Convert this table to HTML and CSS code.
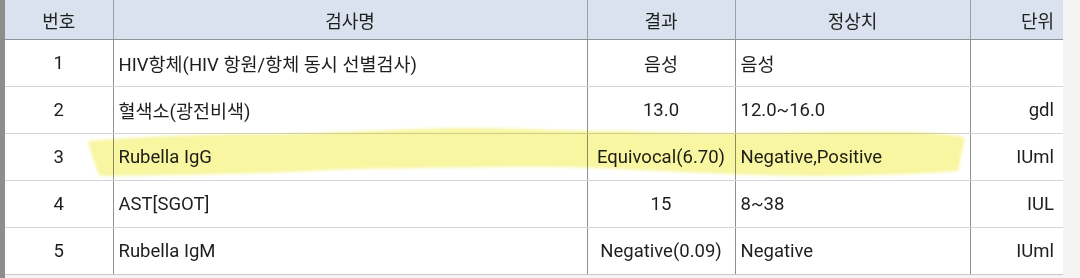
FILE: index.html
```html
<!DOCTYPE html>
<html lang="ko">
<head>
<meta charset="utf-8">
<link rel="stylesheet" href="styles.css">
</head>
<body>
<div class="page">
  <div class="edge"></div>
  <table class="results">
    <colgroup>
      <col class="c-no"><col class="c-name"><col class="c-res"><col class="c-norm"><col class="c-unit">
    </colgroup>
    <thead>
      <tr>
        <th class="center">번호</th>
        <th class="center">검사명</th>
        <th class="center">결과</th>
        <th class="center">정상치</th>
        <th class="right">단위</th>
      </tr>
    </thead>
    <tbody>
      <tr>
        <td class="center">1</td>
        <td>HIV항체(HIV 항원/항체 동시 선별검사)</td>
        <td class="center">음성</td>
        <td>음성</td>
        <td class="right"></td>
      </tr>
      <tr>
        <td class="center">2</td>
        <td>혈색소(광전비색)</td>
        <td class="center">13.0</td>
        <td>12.0~16.0</td>
        <td class="right">gdl</td>
      </tr>
      <tr>
        <td class="center">3</td>
        <td>Rubella IgG</td>
        <td class="center">Equivocal(6.70)</td>
        <td>Negative,Positive</td>
        <td class="right">IUml</td>
      </tr>
      <tr>
        <td class="center">4</td>
        <td>AST[SGOT]</td>
        <td class="center">15</td>
        <td>8~38</td>
        <td class="right">IUL</td>
      </tr>
      <tr>
        <td class="center">5</td>
        <td>Rubella IgM</td>
        <td class="center">Negative(0.09)</td>
        <td>Negative</td>
        <td class="right">IUml</td>
      </tr>
    </tbody>
  </table>
</div>
<svg class="marker" width="1080" height="278" viewBox="0 0 1080 278" aria-hidden="true">
  <defs>
    <filter id="soft" x="-5%" y="-50%" width="110%" height="200%">
      <feGaussianBlur stdDeviation="1.4"/>
    </filter>
  </defs>
  <path filter="url(#soft)" fill="#f5f27e" fill-opacity="0.72"
    d="M88 141 C140 137 200 134 280 134 C360 132 400 129 460 128 C520 128 560 131 620 131 C700 134 760 133 840 132 C900 131 940 132 965 137 L958 171 C920 174 880 175 820 176 C760 176 700 173 640 170 C600 168 560 166 500 167 C440 168 380 168 330 170 C260 174 180 175 100 176 C94 164 91 152 88 141 Z"/>
</svg>
</body>
</html>
```

FILE: styles.css
```css
html, body {
  margin: 0;
  padding: 0;
}
body {
  background: #f4f4f4;
  font-family: Roboto, "Noto Sans CJK KR", sans-serif;
  color: #1e1e1e;
  width: 1080px;
  height: 278px;
  overflow: hidden;
  position: relative;
}
.page {
  display: flex;
  align-items: flex-start;
}
.edge {
  width: 5px;
  height: 278px;
  background: #8d8d8d;
  flex: none;
}
.results {
  width: 1058px;
  border-collapse: collapse;
  table-layout: fixed;
  background: #ffffff;
  font-size: 18.5px;
  border-bottom: 1px solid #c8c8c8;
}
.c-no { width: 108px; }
.c-name { width: 474px; }
.c-res { width: 148px; }
.c-norm { width: 235px; }
.c-unit { width: 93px; }

.results th {
  background: #d9e2ee;
  font-weight: 400;
  font-size: 18px;
  height: 39px;
  padding: 0 8px;
  border-bottom: 1px solid #8e9196;
  border-left: 1px solid #9aa0a6;
}
.results td {
  height: 46px;
  padding: 0 5px;
  border-bottom: 1px solid #d4d4d4;
  border-left: 1px solid #8f8f8f;
  white-space: nowrap;
}
.results th:first-child,
.results td:first-child {
  border-left: none;
}
.results tbody tr:last-child td {
  border-bottom: 1px solid #c8c8c8;
}
.center { text-align: center; }
.results td.right,
.results th.right {
  text-align: right;
  padding-right: 9px;
}
.marker {
  position: absolute;
  left: 0;
  top: 0;
  pointer-events: none;
  mix-blend-mode: multiply;
}
```
